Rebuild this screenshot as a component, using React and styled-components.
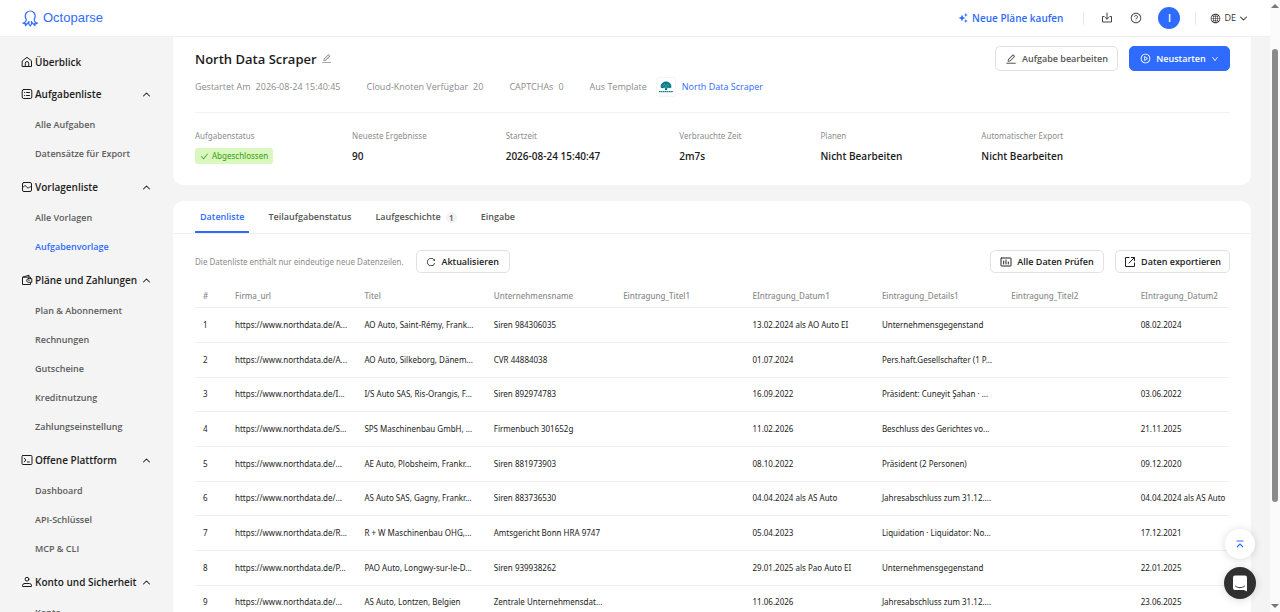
import React from "react";
import {
  AiOutlineCheck,
  AiOutlineDown,
  AiOutlineEdit,
  AiOutlineGlobal,
  AiOutlinePlayCircle,
  AiOutlineQuestionCircle,
  AiOutlineReload,
} from "react-icons/ai";
import styled, { createGlobalStyle } from "styled-components";

const BLUE = "#2f6bff";
const SMALL_FONT = '"Noto Sans", "Open Sans", sans-serif';

const GlobalStyle = createGlobalStyle`
  * {
    box-sizing: border-box;
  }
  body {
    margin: 0;
    overflow: hidden;
    color: #1c1c1c;
    background: #f4f4f4;
    font-family: "Open Sans", "Noto Sans", sans-serif;
    font-size: 9px;
    line-height: 14px;
  }
  button {
    font: inherit;
    color: inherit;
    cursor: pointer;
  }
  a {
    color: inherit;
    text-decoration: none;
  }
  svg {
    display: block;
    flex: none;
  }
`;

const Shell = styled.div`
  display: grid;
  grid-template-columns: minmax(0, 1fr) 10px;
  height: 100vh;
`;

const Page = styled.div`
  display: flex;
  flex-direction: column;
  min-height: 0;
`;

/* top bar */

const TopBar = styled.header`
  display: flex;
  flex: none;
  align-items: center;
  justify-content: space-between;
  height: 37px;
  padding: 0 22px;
  border-bottom: 1px solid #f0f0f0;
  background: #fff;
`;

const Logo = styled.a`
  display: flex;
  align-items: center;
  gap: 4px;
  color: ${BLUE};
  font-family: "Liberation Sans", Arial, sans-serif;
  font-size: 13px;
`;

const TopActions = styled.div`
  display: flex;
  align-items: center;
`;

const BuyLink = styled.a`
  display: flex;
  align-items: center;
  gap: 4px;
  color: ${BLUE};
  font-size: 10px;
  font-weight: 600;
`;

const Divider = styled.span`
  width: 1px;
  height: 13px;
  margin: 0 ${(props) => props.$right}px 0 ${(props) => props.$left}px;
  background: #e8e8e8;
`;

const IconButton = styled.button`
  display: flex;
  padding: 0;
  margin-right: ${(props) => props.$gap || 0}px;
  border: 0;
  background: none;
  color: #444;
`;

const Avatar = styled.button`
  width: 22px;
  height: 22px;
  padding: 0;
  border: 0;
  border-radius: 50%;
  background: ${BLUE};
  color: #fff;
  font-size: 10px;
  font-weight: 600;
`;

const Language = styled.button`
  display: flex;
  align-items: center;
  gap: 3px;
  padding: 0;
  border: 0;
  background: none;
  color: #333;
`;

/* sidebar */

const Body = styled.div`
  display: flex;
  flex: 1;
  min-height: 0;
`;

const Sidebar = styled.nav`
  flex: none;
  width: 173px;
  padding: 9px 22px 0 21px;
  overflow: hidden;
`;

const Group = styled.div`
  margin-bottom: 3px;
`;

const GroupHead = styled.button`
  display: flex;
  align-items: center;
  gap: 2px;
  width: 100%;
  height: 32px;
  padding: 0;
  border: 0;
  background: none;
  color: #1c1c1c;
  font-size: 10px;
  font-weight: 600;
  text-align: left;

  span {
    flex: 1;
    white-space: nowrap;
  }
`;

const SubLink = styled.a`
  display: flex;
  align-items: center;
  height: 29px;
  padding-left: 14px;
  color: ${(props) => (props.$active ? BLUE : "#5c5c5c")};
  font-weight: 600;
`;

/* content */

const Main = styled.main`
  flex: 1;
  min-width: 0;
  padding-right: 19px;
  overflow: hidden;
`;

const TaskCard = styled.section`
  padding: 9px 21px 0 22px;
  height: 148px;
  margin-bottom: 16px;
  border-radius: 0 0 10px 10px;
  background: #fff;
`;

const TitleRow = styled.div`
  display: flex;
  align-items: center;
  justify-content: space-between;
`;

const Title = styled.h1`
  display: flex;
  align-items: center;
  gap: 4px;
  margin: 0;
  font-size: 13px;
  font-weight: 600;
  line-height: 18px;
`;

const ButtonRow = styled.div`
  display: flex;
  gap: 11px;
`;

const Button = styled.button`
  display: flex;
  align-items: center;
  justify-content: center;
  gap: 5px;
  min-width: ${(props) => props.$width}px;
  height: ${(props) => (props.$large ? 25 : 23)}px;
  padding: 0 8px;
  border: 1px solid ${(props) => (props.$primary ? BLUE : "#e2e2e2")};
  border-radius: 5px;
  background: ${(props) => (props.$primary ? BLUE : "#fff")};
  color: ${(props) => (props.$primary ? "#fff" : props.$large ? "#555" : "#222")};
  font-weight: 600;
  white-space: nowrap;
`;

const Meta = styled.div`
  display: flex;
  align-items: center;
  gap: 26px;
  height: 42px;
  margin-bottom: 16px;
  padding-bottom: 9px;
  border-bottom: 1px solid #f2f2f2;
  color: #8c8c8c;
`;

const MetaItem = styled.span`
  display: flex;
  align-items: center;
  gap: ${(props) => props.$gap || 5}px;

  a {
    color: ${BLUE};
  }
`;

const TemplateIcon = styled.span`
  display: flex;
  align-items: center;
  justify-content: center;
  width: 20px;
  height: 20px;
  margin-right: -3px;
  border: 1px solid #f5f5f5;
  border-radius: 3px;
`;

const Stats = styled.dl`
  display: flex;
  gap: 79px;
  margin: 0;
`;

const Stat = styled.div`
  dt {
    margin-bottom: 5px;
    color: #8c8c8c;
    font-family: ${SMALL_FONT};
    font-size: 8px;
    line-height: 14px;
  }
  dd {
    display: flex;
    align-items: center;
    height: 16px;
    margin: 0;
    font-size: 10px;
    font-weight: 600;
  }
`;

const StatusTag = styled.span`
  display: flex;
  align-items: center;
  gap: 3px;
  height: 16px;
  padding: 0 5px;
  border-radius: 3px;
  background: #d9f7be;
  color: #389e0d;
  font-family: ${SMALL_FONT};
  font-size: 8px;
  font-weight: 400;
`;

const DataCard = styled.section`
  border-radius: 10px 10px 0 0;
  background: #fff;
`;

const Tabs = styled.div`
  display: flex;
  gap: 14px;
  height: 33px;
  padding: 0 22px;
  border-bottom: 1px solid #f0f0f0;
`;

const Tab = styled.button`
  display: flex;
  align-items: center;
  gap: 5px;
  padding: 2px 5px 0;
  border: 0;
  border-bottom: 2px solid ${(props) => (props.$active ? BLUE : "transparent")};
  background: none;
  color: ${(props) => (props.$active ? BLUE : "#555")};
  font-weight: 600;
`;

const Count = styled.span`
  width: 11px;
  border-radius: 50%;
  background: #f2f2f2;
  font-family: ${SMALL_FONT};
  font-size: 8px;
  line-height: 11px;
  text-align: center;
`;

const DataPanel = styled.div`
  padding: 16px 21px 0 22px;
`;

const Toolbar = styled.div`
  display: flex;
  align-items: center;
  justify-content: space-between;
  margin-bottom: 12px;
`;

const Hint = styled.div`
  display: flex;
  align-items: center;
  gap: 12px;

  p {
    margin: 0;
    color: #8c8c8c;
    font-family: ${SMALL_FONT};
    font-size: 8px;
  }
`;

const DataTable = styled.table`
  width: 100%;
  table-layout: fixed;
  border-collapse: collapse;
  font-family: ${SMALL_FONT};
  font-size: 8px;
  white-space: nowrap;

  th,
  td {
    padding: 0 0 0 8px;
    text-align: left;
  }
  th {
    width: 12.5%;
    height: 22px;
    border-bottom: 1px solid #f0f0f0;
    color: #8c8c8c;
    font-weight: 500;
  }
  th:first-child {
    width: 32px;
  }
  th:last-child {
    width: auto;
  }
  td {
    height: 35px;
    border-bottom: 1px solid #f0f0f0;
    color: #222;
  }
  tr:nth-child(3n) td {
    height: 34px;
  }
`;

/* floating controls */

const Floating = styled.div`
  position: fixed;
  right: 24px;
  bottom: 13px;
  display: flex;
  flex-direction: column;
  align-items: center;
  gap: 8px;
`;

const FloatButton = styled.button`
  display: flex;
  align-items: center;
  justify-content: center;
  width: ${(props) => props.$size}px;
  height: ${(props) => props.$size}px;
  padding: 0;
  border: 0;
  border-radius: 50%;
  background: ${(props) => (props.$dark ? "#303030" : "#fff")};
  box-shadow: 0 1px 8px rgba(0, 0, 0, 0.15);
`;

const ScrollTrack = styled.div`
  display: flex;
  flex-direction: column;
  align-items: center;
  padding: 4px 0;
  background: #fbfbfb;
`;

const ScrollThumb = styled.div`
  width: 6px;
  height: 75%;
  margin: 41px 0 auto;
  border-radius: 3px;
  background: #8b8b8b;
`;

const LineIcon = ({ children, size = 12, width = 1 }) => (
  <svg
    width={size}
    height={size}
    viewBox="0 0 12 12"
    fill="none"
    stroke="currentColor"
    strokeWidth={width}
    strokeLinecap="round"
    strokeLinejoin="round"
    aria-hidden="true"
  >
    {children}
  </svg>
);

const ChevronUp = () => (
  <LineIcon size={9} width={1.4}>
    <path d="M2 8l4-4 4 4" />
  </LineIcon>
);

const ChevronDown = () => (
  <LineIcon size={9} width={1.4}>
    <path d="M2 4l4 4 4-4" />
  </LineIcon>
);

const HomeIcon = () => (
  <LineIcon>
    <path d="M1.500 4.800 6 1.300l4.500 3.500v5.700h-9zM4.300 10.500V7.300a1.700 1.700 0 0 1 3.400 0v3.200" />
  </LineIcon>
);

const ListIcon = () => (
  <LineIcon>
    <rect x="1.200" y="1.500" width="9.600" height="9" rx="1.500" />
    <path d="M3.500 4.500h.2M3.500 7.500h.2M5.500 4.500h3M5.500 7.500h3" />
  </LineIcon>
);

const TemplateListIcon = () => (
  <LineIcon>
    <rect x="1.500" y="1.500" width="9" height="9" rx="1.500" />
    <path d="M1.500 6.200c1.500 0 1.500-1.500 2.700-1.500S5.800 7 7 7s1.500-1.500 3.500-1.500" />
  </LineIcon>
);

const WalletIcon = () => (
  <LineIcon>
    <path d="M9.500 4.500V3.200H1.500v7.300h8V9M2 3l6-1.800V3" />
    <path d="M7.500 4.700h3.300v3.600H7.500a1.800 1.800 0 0 1 0-3.600zM7.900 6.500h.2" />
  </LineIcon>
);

const TerminalIcon = () => (
  <LineIcon>
    <rect x="1" y="1.500" width="10" height="9" rx="1" />
    <path d="M3.200 4.200 5 6 3.200 7.800M6.300 8h2" />
  </LineIcon>
);

const UserIcon = () => (
  <LineIcon>
    <circle cx="6" cy="3.200" r="1.900" />
    <path d="M3.500 7.500h5a2 2 0 0 1 2 2v1h-9v-1a2 2 0 0 1 2-2z" />
  </LineIcon>
);

const DownloadIcon = () => (
  <LineIcon>
    <path d="M3 4.500H1.500v5.500h9V4.500H9M6 1v6M4 5.200l2 2 2-2" />
  </LineIcon>
);

const ChartIcon = () => (
  <LineIcon>
    <rect x="1" y="2" width="10" height="8" rx=".5" />
    <path d="M3.700 5v3M6 4v4M8.300 6v2" />
  </LineIcon>
);

const ExportIcon = () => (
  <LineIcon>
    <path d="M5 1.500H1.500v9h9V7M7.300 1.500h3.200v3.200M10.300 1.700 5 7" />
  </LineIcon>
);

const SparkIcon = () => (
  <svg width="10" height="10" viewBox="0 0 10 10" fill={BLUE} aria-hidden="true">
    <path d="M4 1.500 5 4l2.500 1L5 6 4 8.500 3 6 .5 5 3 4zM7.800 0l.6 1.400 1.400.6-1.400.6-.6 1.400-.6-1.400L5.800 2l1.400-.6zM7.800 6l.6 1.400 1.400.6-1.400.6-.6 1.400-.6-1.400L5.800 8l1.400-.6z" />
  </svg>
);

const OctopusIcon = () => (
  <svg
    width="17"
    height="17"
    viewBox="0 0 17 17"
    fill="none"
    stroke={BLUE}
    strokeWidth="1.200"
    strokeLinejoin="round"
    strokeLinecap="round"
    aria-hidden="true"
  >
    <path d="M.9 13c1.900-.3 3.300-1.600 3.300-3.600C3.500 8.300 3.200 7.300 3.200 6a5 5 0 0 1 10 0c0 1.300-.3 2.300-1 3.400 0 2 1.400 3.300 3.300 3.600M.9 13c.8 1 2 1 3 .6l-.4 2 2.300-2.400M15.500 13c-.8 1-2 1-3 .6l.4 2-2.300-2.400M5.800 13.200l1.200-1.600-.2 2.400 1.400 2 1.400-2-.2-2.400 1.200 1.600" />
  </svg>
);

const TreeIcon = () => (
  <svg width="14" height="12" viewBox="0 0 14 12" aria-hidden="true">
    <path
      fill="#0e7d8c"
      d="M1.700 6.500C1.200 3 4 .5 7 .5s6 2.500 5.300 6c-1.300 1.300-2.600.5-3.300 0-.8.5-1 1.500-.7 2.500H6c.2-1 0-2-.6-2.500-1 .7-2.500 1.200-3.700 0z"
    />
    <path stroke="#0e7d8c" strokeWidth="1.200" strokeDasharray="1.500 .4" d="M0 10.700h14" />
    <path stroke="#8cc9cf" strokeWidth=".5" fill="none" d="M4 5l2-2M8 3l2 2M7 7V4" />
  </svg>
);

const TopIcon = () => (
  <svg width="8" height="8" viewBox="0 0 8 8" fill="none" stroke={BLUE} aria-hidden="true">
    <path d="M.5 1h7M1 7l3-3 3 3" strokeWidth="1.200" />
  </svg>
);

const ChatIcon = () => (
  <svg width="16" height="17" viewBox="0 0 16 17" aria-hidden="true">
    <path fill="#fff" d="M3 .5h10a2 2 0 0 1 2 2V16.500L11.800 15H3a2 2 0 0 1-2-2V2.500a2 2 0 0 1 2-2z" />
    <path fill="none" stroke="#303030" strokeLinecap="round" d="M3.500 11.200c2.800 2 6.200 2 9 0" />
  </svg>
);

const groups = [
  { label: "Aufgabenliste", icon: <ListIcon />, links: ["Alle Aufgaben", "Datensätze für Export"] },
  { label: "Vorlagenliste", icon: <TemplateListIcon />, links: ["Alle Vorlagen", "Aufgabenvorlage"] },
  {
    label: "Pläne und Zahlungen",
    icon: <WalletIcon />,
    links: ["Plan & Abonnement", "Rechnungen", "Gutscheine", "Kreditnutzung", "Zahlungseinstellung"],
  },
  { label: "Offene Plattform", icon: <TerminalIcon />, links: ["Dashboard", "API-Schlüssel", "MCP & CLI"] },
  { label: "Konto und Sicherheit", icon: <UserIcon />, links: ["Konto"] },
];

const stats = [
  ["Neueste Ergebnisse", "90"],
  ["Startzeit", "2026-08-24 15:40:47"],
  ["Verbrauchte Zeit", "2m7s"],
  ["Planen", "Nicht Bearbeiten"],
  ["Automatischer Export", "Nicht Bearbeiten"],
];

const columns = [
  "#",
  "Firma_url",
  "Titel",
  "Unternehmensname",
  "Eintragung_Titel1",
  "EIntragung_Datum1",
  "Eintragung_Details1",
  "Eintragung_Titel2",
  "EIntragung_Datum2",
];

const rows = [
  ["https://www.northdata.de/A...", "AO Auto, Saint-Rémy, Frank...", "Siren 984306035", "", "13.02.2024 als AO Auto EI", "Unternehmensgegenstand", "", "08.02.2024"],
  ["https://www.northdata.de/A...", "AO Auto, Silkeborg, Dänem...", "CVR 44884038", "", "01.07.2024", "Pers.haft.Gesellschafter (1 P...", "", ""],
  ["https://www.northdata.de/I...", "I/S Auto SAS, Ris-Orangis, F...", "Siren 892974783", "", "16.09.2022", "Präsident: Cuneyit Şahan · ...", "", "03.06.2022"],
  ["https://www.northdata.de/S...", "SPS Maschinenbau GmbH, ...", "Firmenbuch 301652g", "", "11.02.2026", "Beschluss des Gerichtes vo...", "", "21.11.2025"],
  ["https://www.northdata.de/...", "AE Auto, Plobsheim, Frankr...", "Siren 881973903", "", "08.10.2022", "Präsident (2 Personen)", "", "09.12.2020"],
  ["https://www.northdata.de/...", "AS Auto SAS, Gagny, Frankr...", "Siren 883736530", "", "04.04.2024 als AS Auto", "Jahresabschluss zum 31.12....", "", "04.04.2024 als AS Auto"],
  ["https://www.northdata.de/R...", "R + W Maschinenbau OHG,...", "Amtsgericht Bonn HRA 9747", "", "05.04.2023", "Liquidation · Liquidator: No...", "", "17.12.2021"],
  ["https://www.northdata.de/P...", "PAO Auto, Longwy-sur-le-D...", "Siren 939938262", "", "29.01.2025 als Pao Auto EI", "Unternehmensgegenstand", "", "22.01.2025"],
  ["https://www.northdata.de/...", "AS Auto, Lontzen, Belgien", "Zentrale Unternehmensdat...", "", "11.06.2026", "Jahresabschluss zum 31.12....", "", "23.06.2025"],
];

function Header() {
  return (
    <TopBar>
      <Logo href="#">
        <OctopusIcon />
        Octoparse
      </Logo>
      <TopActions>
        <BuyLink href="#">
          <SparkIcon />
          Neue Pläne kaufen
        </BuyLink>
        <Divider $left={20} $right={17} />
        <IconButton $gap={17} aria-label="Downloads">
          <DownloadIcon />
        </IconButton>
        <IconButton $gap={16} aria-label="Hilfe">
          <AiOutlineQuestionCircle size={12} />
        </IconButton>
        <Avatar>I</Avatar>
        <Divider $left={15} $right={14} />
        <Language>
          <AiOutlineGlobal size={11} />
          DE
          <ChevronDown />
        </Language>
      </TopActions>
    </TopBar>
  );
}

function Navigation() {
  return (
    <Sidebar>
      <GroupHead>
        <HomeIcon />
        <span>Überblick</span>
      </GroupHead>
      {groups.map((group) => (
        <Group key={group.label}>
          <GroupHead>
            {group.icon}
            <span>{group.label}</span>
            <ChevronUp />
          </GroupHead>
          {group.links.map((link) => (
            <SubLink key={link} href="#" $active={link === "Aufgabenvorlage"}>
              {link}
            </SubLink>
          ))}
        </Group>
      ))}
    </Sidebar>
  );
}

function TaskSummary() {
  return (
    <TaskCard>
      <TitleRow>
        <Title>
          North Data Scraper
          <IconButton aria-label="Umbenennen">
            <AiOutlineEdit size={11} color="#888" />
          </IconButton>
        </Title>
        <ButtonRow>
          <Button $large $width={123}>
            <AiOutlineEdit size={12} />
            Aufgabe bearbeiten
          </Button>
          <Button $large $primary $width={101}>
            <AiOutlinePlayCircle size={11} />
            Neustarten
            <AiOutlineDown size={8} />
          </Button>
        </ButtonRow>
      </TitleRow>
      <Meta>
        <MetaItem>
          <span>Gestartet Am</span>
          <span>2026-08-24 15:40:45</span>
        </MetaItem>
        <MetaItem>
          <span>Cloud-Knoten Verfügbar</span>
          <span>20</span>
        </MetaItem>
        <MetaItem>
          <span>CAPTCHAs</span>
          <span>0</span>
        </MetaItem>
        <MetaItem $gap={9}>
          <span>Aus Template</span>
          <TemplateIcon>
            <TreeIcon />
          </TemplateIcon>
          <a href="#">North Data Scraper</a>
        </MetaItem>
      </Meta>
      <Stats>
        <Stat>
          <dt>Aufgabenstatus</dt>
          <dd>
            <StatusTag>
              <AiOutlineCheck size={9} />
              Abgeschlossen
            </StatusTag>
          </dd>
        </Stat>
        {stats.map(([label, value]) => (
          <Stat key={label}>
            <dt>{label}</dt>
            <dd>{value}</dd>
          </Stat>
        ))}
      </Stats>
    </TaskCard>
  );
}

function DataList() {
  return (
    <DataCard>
      <Tabs>
        <Tab $active>Datenliste</Tab>
        <Tab>Teilaufgabenstatus</Tab>
        <Tab>
          Laufgeschichte
          <Count>1</Count>
        </Tab>
        <Tab>Eingabe</Tab>
      </Tabs>
      <DataPanel>
        <Toolbar>
          <Hint>
            <p>Die Datenliste enthält nur eindeutige neue Datenzeilen.</p>
            <Button $width={94}>
              <AiOutlineReload size={10} />
              Aktualisieren
            </Button>
          </Hint>
          <ButtonRow>
            <Button $width={114}>
              <ChartIcon />
              Alle Daten Prüfen
            </Button>
            <Button $width={115}>
              <ExportIcon />
              Daten exportieren
            </Button>
          </ButtonRow>
        </Toolbar>
        <DataTable>
          <thead>
            <tr>
              {columns.map((column) => (
                <th key={column}>{column}</th>
              ))}
            </tr>
          </thead>
          <tbody>
            {rows.map((row, i) => (
              <tr key={i}>
                <td>{i + 1}</td>
                {row.map((cell, j) => (
                  <td key={columns[j + 1]}>{cell}</td>
                ))}
              </tr>
            ))}
          </tbody>
        </DataTable>
      </DataPanel>
    </DataCard>
  );
}

export default function App() {
  return (
    <>
      <GlobalStyle />
      <Shell>
        <Page>
          <Header />
          <Body>
            <Navigation />
            <Main>
              <TaskSummary />
              <DataList />
            </Main>
          </Body>
        </Page>
        <ScrollTrack>
          <svg width="8" height="4" viewBox="0 0 8 4">
            <path d="M4 0l4 4H0z" fill="#777" />
          </svg>
          <ScrollThumb />
          <svg width="8" height="4" viewBox="0 0 8 4">
            <path d="M4 4l4-4H0z" fill="#777" />
          </svg>
        </ScrollTrack>
      </Shell>
      <Floating>
        <FloatButton $size={30} aria-label="Nach oben">
          <TopIcon />
        </FloatButton>
        <FloatButton $size={32} $dark aria-label="Chat">
          <ChatIcon />
        </FloatButton>
      </Floating>
    </>
  );
}
